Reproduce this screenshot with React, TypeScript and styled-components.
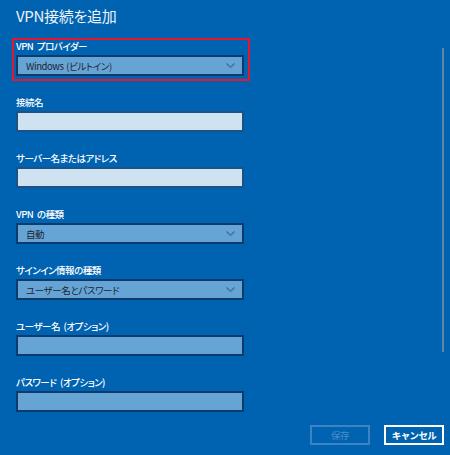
import React from "react";
import styled, { createGlobalStyle, css } from "styled-components";

const Global = createGlobalStyle`
  html, body { margin: 0; padding: 0; background: #0063b1; }
  body { font-family: "Noto Sans CJK JP", "Noto Sans", sans-serif; }
`;

const Page = styled.div`
  width: 450px;
  height: 455px;
  box-sizing: border-box;
  background: #0063b1;
  padding: 5px 0 0 16px;
  display: flex;
  flex-direction: column;
  overflow: hidden;
  font-feature-settings: "palt";
`;

const Title = styled.h1`
  margin: 0 0 12px 0;
  font-size: 15px;
  line-height: 22px;
  font-weight: 400;
  letter-spacing: -0.3px;
  color: #eef3f9;
`;

const ScrollArea = styled.div`
  display: flex;
  flex-direction: row;
`;

const Form = styled.div`
  width: 228px;
  display: flex;
  flex-direction: column;
  gap: 19px;
`;

const Track = styled.div`
  width: 2px;
  height: 304px;
  margin: 9px 0 0 198px;
  background: #5f86ad;
`;

const Field = styled.div<{ $highlight?: boolean }>`
  position: relative;
  display: flex;
  flex-direction: column;
  gap: 2px;
  ${(p) =>
    p.$highlight &&
    css`
      &::after {
        content: "";
        position: absolute;
        left: -4px;
        top: -1px;
        right: -6px;
        bottom: -5px;
        border: 2px solid #e3172d;
        pointer-events: none;
      }
    `}
`;

const Label = styled.label`
  font-size: 9.5px;
  line-height: 14px;
  letter-spacing: -0.5px;
  word-spacing: 2px;
  color: #ffffff;
  font-weight: 500;
  white-space: nowrap;
`;

const controlBase = css`
  box-sizing: border-box;
  height: 21px;
  width: 228px;
  border: 2px solid #0d3c6c;
  font-family: inherit;
  font-size: 9.5px;
  letter-spacing: -0.4px;
  word-spacing: 1px;
  padding: 0 0 0 8px;
  margin: 0;
`;

const TextBox = styled.input<{ $light?: boolean }>`
  ${controlBase};
  background: ${(p) => (p.$light ? "#cfe2f1" : "#67a4d6")};
  border-color: ${(p) => (p.$light ? "#1d5285" : "#0d3c6c")};
  outline: none;
`;

const Select = styled.div`
  ${controlBase};
  background: #67a4d6;
  display: flex;
  align-items: center;
  justify-content: space-between;
  padding-right: 7px;
  color: #1b2430;
`;

const Chevron = () => (
  <svg width="9" height="5" viewBox="0 0 9 5">
    <path d="M0.5 0.5 L4.5 4.3 L8.5 0.5" fill="none" stroke="#39699a" strokeWidth="1.1" />
  </svg>
);

const Buttons = styled.div`
  display: flex;
  justify-content: flex-end;
  gap: 14px;
  padding-right: 6px;
  margin-top: 13px;
`;

const Button = styled.button<{ $disabled?: boolean }>`
  box-sizing: border-box;
  width: 60px;
  height: 20px;
  background: transparent;
  font-family: inherit;
  font-size: 9.5px;
  letter-spacing: -0.6px;
  font-weight: ${(p) => (p.$disabled ? 400 : 700)};
  padding: 0;
  cursor: default;
  border: 2px solid ${(p) => (p.$disabled ? "#3d82c3" : "#ffffff")};
  color: ${(p) => (p.$disabled ? "#4a8ccb" : "#ffffff")};
`;

export default function App() {
  return (
    <>
      <Global />
      <Page>
        <Title>VPN接続を追加</Title>
        <ScrollArea>
          <Form>
            <Field $highlight>
              <Label>VPN プロバイダー</Label>
              <Select>
                <span>Windows (ビルトイン)</span>
                <Chevron />
              </Select>
            </Field>
            <Field>
              <Label>接続名</Label>
              <TextBox $light />
            </Field>
            <Field>
              <Label>サーバー名またはアドレス</Label>
              <TextBox $light />
            </Field>
            <Field>
              <Label>VPN の種類</Label>
              <Select>
                <span>自動</span>
                <Chevron />
              </Select>
            </Field>
            <Field>
              <Label>サインイン情報の種類</Label>
              <Select>
                <span>ユーザー名とパスワード</span>
                <Chevron />
              </Select>
            </Field>
            <Field>
              <Label>ユーザー名 (オプション)</Label>
              <TextBox />
            </Field>
            <Field>
              <Label>パスワード (オプション)</Label>
              <TextBox type="password" />
            </Field>
          </Form>
          <Track />
        </ScrollArea>
        <Buttons>
          <Button $disabled>保存</Button>
          <Button>キャンセル</Button>
        </Buttons>
      </Page>
    </>
  );
}
